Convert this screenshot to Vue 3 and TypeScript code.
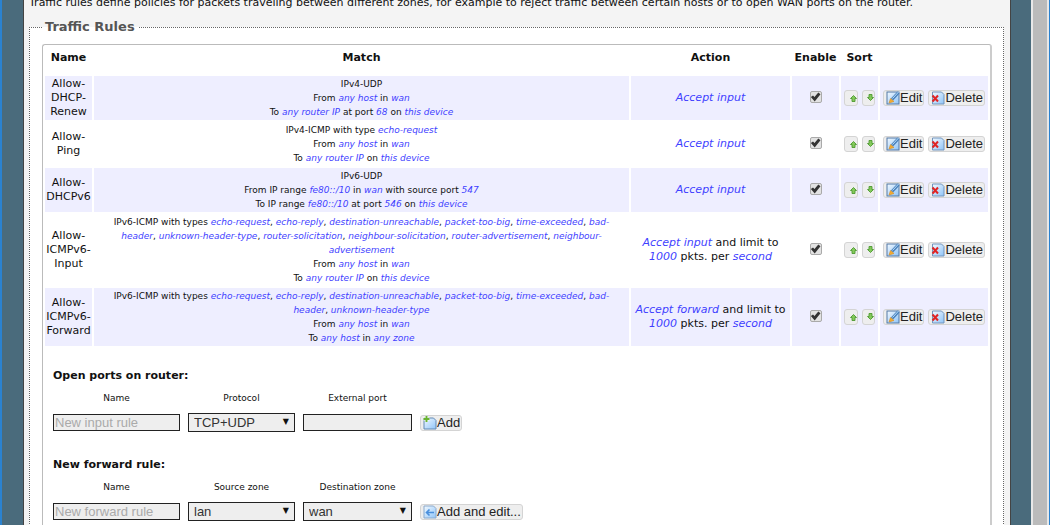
<script setup lang="ts">
interface Part {
  t: string
  v?: boolean
}
interface Rule {
  name: string
  match: Part[][]
  action: Part[]
}

/* Text between asterisks is a variable value and is drawn in italics. */
function parse(line: string): Part[] {
  return line
    .split('*')
    .map((t, i) => ({ t, v: i % 2 === 1 }))
    .filter((p) => p.t !== '')
}

function rule(name: string, match: string[], action: string): Rule {
  return { name, match: match.map(parse), action: parse(action) }
}

const rules: Rule[] = [
  rule(
    'Allow-DHCP-Renew',
    ['IPv4-UDP', 'From *any host* in *wan*', 'To *any router IP* at port *68* on *this device*'],
    '*Accept input*',
  ),
  rule(
    'Allow-Ping',
    ['IPv4-ICMP with type *echo-request*', 'From *any host* in *wan*', 'To *any router IP* on *this device*'],
    '*Accept input*',
  ),
  rule(
    'Allow-DHCPv6',
    [
      'IPv6-UDP',
      'From IP range *fe80::/10* in *wan* with source port *547*',
      'To IP range *fe80::/10* at port *546* on *this device*',
    ],
    '*Accept input*',
  ),
  rule(
    'Allow-ICMPv6-Input',
    [
      'IPv6-ICMP with types *echo-request*, *echo-reply*, *destination-unreachable*, *packet-too-big*, *time-exceeded*, *bad-header*, *unknown-header-type*, *router-solicitation*, *neighbour-solicitation*, *router-advertisement*, *neighbour-advertisement*',
      'From *any host* in *wan*',
      'To *any router IP* on *this device*',
    ],
    '*Accept input* and limit to *1000* pkts. per *second*',
  ),
  rule(
    'Allow-ICMPv6-Forward',
    [
      'IPv6-ICMP with types *echo-request*, *echo-reply*, *destination-unreachable*, *packet-too-big*, *time-exceeded*, *bad-header*, *unknown-header-type*',
      'From *any host* in *wan*',
      'To *any host* in *any zone*',
    ],
    '*Accept forward* and limit to *1000* pkts. per *second*',
  ),
]
</script>

<template>
  <svg class="defs" aria-hidden="true">
    <defs>
      <linearGradient id="sheet" x1="0" y1="0" x2="1" y2="1">
        <stop offset="0" stop-color="#f2f9ff" />
        <stop offset="1" stop-color="#8fc4f8" />
      </linearGradient>
    </defs>
  </svg>
  <div class="window">
    <div class="backdrop">
      <main class="panel">
        <p class="intro">
          Traffic rules define policies for packets traveling between different zones, for example to reject traffic
          between certain hosts or to open WAN ports on the router.
        </p>
        <fieldset class="rules">
          <legend>Traffic Rules</legend>
          <div class="box">
            <table>
              <colgroup>
                <col class="c-name" />
                <col />
                <col class="c-action" />
                <col class="c-enable" />
                <col class="c-sort" />
                <col class="c-buttons" />
              </colgroup>
              <thead>
                <tr>
                  <th>Name</th>
                  <th>Match</th>
                  <th>Action</th>
                  <th>Enable</th>
                  <th>Sort</th>
                  <td></td>
                </tr>
              </thead>
              <tbody>
                <tr v-for="r in rules" :key="r.name">
                  <td>{{ r.name }}</td>
                  <td class="match">
                    <div v-for="(line, i) in r.match" :key="i">
                      <template v-for="(p, j) in line" :key="j"
                        ><var v-if="p.v">{{ p.t }}</var
                        ><template v-else>{{ p.t }}</template></template
                      >
                    </div>
                  </td>
                  <td class="action">
                    <template v-for="(p, j) in r.action" :key="j"
                      ><var v-if="p.v">{{ p.t }}</var
                      ><template v-else>{{ p.t }}</template></template
                    >
                  </td>
                  <td><input type="checkbox" checked :aria-label="'Enable ' + r.name" /></td>
                  <td>
                    <div class="cell">
                      <button type="button" class="move" :aria-label="'Move up ' + r.name">
                        <svg width="7" height="7" viewBox="0 0 7 7">
                          <path d="M3.5.5 6.5 3.5H5v3H2v-3H.5z" fill="#83c95a" stroke="#4e9a32" stroke-width=".9" />
                        </svg>
                      </button>
                      <button type="button" class="move down" :aria-label="'Move down ' + r.name">
                        <svg width="7" height="7" viewBox="0 0 7 7">
                          <path d="M3.5 6.5 6.5 3.5H5v-3H2v3H.5z" fill="#83c95a" stroke="#4e9a32" stroke-width=".9" />
                        </svg>
                      </button>
                    </div>
                  </td>
                  <td>
                    <div class="cell">
                      <button type="button" class="btn">
                        <svg width="14" height="14" viewBox="0 0 14 14">
                          <rect x="1" y="1" width="12" height="12" fill="url(#sheet)" stroke="#5379a5" />
                          <path d="M12.5 1.5 6 8.5" stroke="#4b83bd" stroke-width="3" />
                          <path d="M12.5 1 6.5 7.5" stroke="#b9dcfa" stroke-width="1" />
                          <path d="M3 12 4.5 7.5 8 10.5z" fill="#f3ac32" stroke="#d58c22" stroke-width=".6" />
                        </svg>
                        <span>Edit</span>
                      </button>
                      <button type="button" class="btn">
                        <svg width="14" height="14" viewBox="0 0 14 14">
                          <path d="M1.5 1h9L13 3.5V13H1.5z" fill="url(#sheet)" stroke="#7295bd" />
                          <path d="M1.5 4.5 7 10.500M7 4.500 1.500 10.500" stroke="#e02424" stroke-width="2" />
                        </svg>
                        <span>Delete</span>
                      </button>
                    </div>
                  </td>
                </tr>
              </tbody>
            </table>

            <form class="add" @submit.prevent>
              <h3>Open ports on router:</h3>
              <div class="fields">
                <label for="in-name">Name</label>
                <label for="in-proto">Protocol</label>
                <label for="in-port">External port</label>
                <span></span>
                <input id="in-name" type="text" placeholder="New input rule" />
                <div class="pick">
                  <select id="in-proto">
                    <option>TCP+UDP</option>
                  </select>
                </div>
                <input id="in-port" type="text" />
                <button type="submit" class="btn">
                  <svg width="14" height="14" viewBox="0 0 14 14">
                    <path d="M1 2h9.5L13 4.500V13H1z" fill="url(#sheet)" stroke="#6389b3" />
                    <path d="M3.5 0v6M.5 3h6" stroke="#fff" stroke-width="3" />
                    <path d="M3.5 0v6M.5 3h6" stroke="#69b331" stroke-width="2" />
                  </svg>
                  <span>Add</span>
                </button>
              </div>
            </form>

            <form class="add" @submit.prevent>
              <h3>New forward rule:</h3>
              <div class="fields">
                <label for="fw-name">Name</label>
                <label for="fw-src">Source zone</label>
                <label for="fw-dst">Destination zone</label>
                <span></span>
                <input id="fw-name" type="text" placeholder="New forward rule" />
                <div class="pick">
                  <select id="fw-src">
                    <option>lan</option>
                  </select>
                </div>
                <div class="pick">
                  <select id="fw-dst">
                    <option>wan</option>
                  </select>
                </div>
                <button type="submit" class="btn">
                  <svg width="14" height="14" viewBox="0 0 14 14">
                    <path d="M1 1h9.5L13 3.5V13H1z" fill="url(#sheet)" stroke="#8aa9cc" />
                    <path d="M3 7.5h8M6.5 4.5 3.5 7.5l3 3" fill="none" stroke="#4a8fdc" stroke-width="1.6" />
                  </svg>
                  <span>Add and edit...</span>
                </button>
              </div>
            </form>
          </div>
        </fieldset>
      </main>
    </div>
    <div class="scroll"></div>
  </div>
</template>

<style>
body {
  margin: 0;
  overflow: hidden;
}
</style>

<style scoped>
* {
  box-sizing: border-box;
}
.defs {
  position: absolute;
  width: 0;
  height: 0;
}
.window {
  display: flex;
  height: 100vh;
  overflow: hidden;
  border: solid #2a82d0;
  border-width: 0 1px 0 2px;
  font: 11px/14px 'DejaVu Sans', Verdana, sans-serif;
  color: #111;
}
.backdrop {
  flex: 1;
  min-width: 0;
  padding: 0 20px 0 21px;
  background: #4a6b7c;
}
.panel {
  display: flow-root;
  min-height: 100%;
  padding: 0 6px 0 5px;
  background: #f4f4f4;
  border: solid #444;
  border-width: 0 1px;
}
.scroll {
  width: 18px;
  background: #bbb;
  border: solid #e8e8e8;
  border-width: 0 2px;
}
.intro {
  margin: -4px 0 10px;
  white-space: nowrap;
}
.rules {
  min-width: 0;
  margin: 0;
  padding: 10px 11px 12px 12px;
  background: #fff;
  border: 1px dotted #666;
}
legend {
  padding: 0 4px 0 3px;
  font-size: 13px;
  line-height: 14px;
  font-weight: bold;
  color: #555;
}
.box {
  border: 1px solid #bbb;
  border-right: 2px solid #ccc;
  border-radius: 3px;
  padding-bottom: 12px;
}
table {
  width: 100%;
  table-layout: fixed;
  border-spacing: 2px;
  text-align: center;
}
.c-name {
  width: 47px;
}
.c-action {
  width: 159px;
}
.c-enable {
  width: 47px;
}
.c-sort {
  width: 37px;
}
.c-buttons {
  width: 108px;
}
th {
  height: 27px;
  padding: 0 0 6px;
}
td {
  padding: 1px 0;
  vertical-align: middle;
}
tbody tr:nth-child(odd) td {
  background: #eeeeff;
}
.match {
  padding: 1px 4px;
  font-size: 9px;
}
.action {
  padding: 1px 2px;
}
var {
  color: #3f3fff;
}
.cell {
  display: flex;
  align-items: center;
  gap: 4px;
  padding: 0 3px;
}
button {
  display: flex;
  align-items: center;
  padding: 0;
  background: #eee;
  border: 1px solid #d4d4d4;
  border-radius: 3px;
  color: #222;
  font: 13px/14px 'Liberation Sans', Arial, sans-serif;
}
button svg {
  flex: none;
}
.move {
  justify-content: flex-end;
  width: 14px;
  height: 16px;
}
.move.down {
  padding-bottom: 1px;
}
.btn {
  height: 16px;
  padding: 0 1px 0 2px;
  white-space: nowrap;
}
input[type='checkbox'] {
  appearance: none;
  display: block;
  width: 12px;
  height: 12px;
  margin: 0 auto 2px;
  background: #e2e2e2;
  border: 1px solid #aaa;
  border-radius: 2px;
}
input[type='checkbox']:checked::before {
  content: '';
  display: block;
  width: 10px;
  height: 10px;
  background: #333;
  clip-path: polygon(4% 50%, 25% 34%, 40% 50%, 78% 4%, 100% 22%, 42% 94%);
}
.add {
  padding: 21px 10px 0;
}
h3 {
  margin: 0;
  font-size: 11px;
  line-height: 14px;
}
.fields {
  display: grid;
  grid-template-columns: 127px 107px 109px auto;
  column-gap: 8px;
  justify-content: start;
  align-items: center;
  padding-bottom: 5px;
}
label {
  padding: 8px 0;
  font-size: 9px;
  line-height: 14px;
  text-align: center;
}
input[type='text'],
select {
  width: 100%;
  margin: 0;
  border: 1px solid #222;
  border-radius: 0;
  background: #eee;
  color: #333;
  font: 13px/15px 'Liberation Sans', Arial, sans-serif;
}
input[type='text'] {
  height: 17px;
  padding: 0 1px;
}
input::placeholder {
  color: #aaa;
  opacity: 1;
}
select {
  display: block;
  appearance: none;
  height: 19px;
  padding: 0 20px 0 5px;
}
.pick {
  position: relative;
}
.pick::after {
  content: '▼';
  position: absolute;
  top: 2px;
  right: 6px;
  font-size: 8px;
  pointer-events: none;
}
</style>
